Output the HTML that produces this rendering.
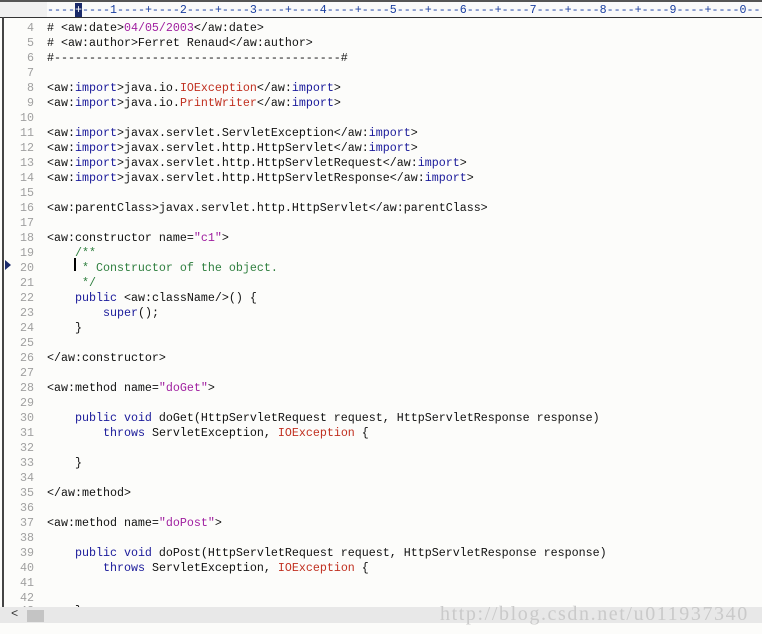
<!DOCTYPE html>
<html><head><style>
body{margin:0;width:762px;height:634px;background:#fcfcfa;position:relative;overflow:hidden;font-family:"Liberation Mono",monospace;font-size:11.67px}
#ruler{position:absolute;left:0;top:0;width:762px;height:18px;background:#f0f0f0;border-top:2px solid #555;border-bottom:1px solid #333;box-sizing:border-box}
#rt{position:absolute;left:47px;top:2px;color:#1a3fa0;white-space:pre;line-height:13px}
#rt b{background:#1a2a6a;color:#fff;font-weight:normal}
#rb{position:absolute;left:47px;top:0;width:715px;height:15px;background:#fafafa}
#lb{position:absolute;left:2px;top:17px;width:2px;height:590px;background:#444}
.l{position:absolute;left:0;height:15px;line-height:15px;white-space:pre;color:#111}
.n{position:absolute;width:34px;text-align:right;color:#a0a0a0}
.c{position:absolute;left:47px}
.k{color:#1a1a9a}.r{color:#c03020}.p{color:#a020a0}.g{color:#2f7f3f}
#sb{position:absolute;left:0;top:607px;width:762px;height:16px;background:#e8e8e8}
#th{position:absolute;left:27px;top:610px;width:17px;height:12px;background:#c4c4c4}
#wm{position:absolute;left:440px;top:603px;font-family:"Liberation Serif",serif;font-size:20px;color:#cacaca;letter-spacing:1.6px}
</style></head><body>
<div id="ruler"><div id="rb"></div><div id="rt">----<b>+</b>----1----+----2----+----3----+----4----+----5----+----6----+----7----+----8----+----9----+----0---</div></div>
<div id="lb"></div>
<div class="l" style="top:21px"><span class="n">4</span><span class="c"># &lt;aw:date&gt;<span class="p">04/05/2003</span>&lt;/aw:date&gt;</span></div>
<div class="l" style="top:36px"><span class="n">5</span><span class="c"># &lt;aw:author&gt;Ferret Renaud&lt;/aw:author&gt;</span></div>
<div class="l" style="top:51px"><span class="n">6</span><span class="c">#-----------------------------------------#</span></div>
<div class="l" style="top:66px"><span class="n">7</span></div>
<div class="l" style="top:81px"><span class="n">8</span><span class="c">&lt;aw:<span class="k">import</span>&gt;java.io.<span class="r">IOException</span>&lt;/aw:<span class="k">import</span>&gt;</span></div>
<div class="l" style="top:96px"><span class="n">9</span><span class="c">&lt;aw:<span class="k">import</span>&gt;java.io.<span class="r">PrintWriter</span>&lt;/aw:<span class="k">import</span>&gt;</span></div>
<div class="l" style="top:111px"><span class="n">10</span></div>
<div class="l" style="top:126px"><span class="n">11</span><span class="c">&lt;aw:<span class="k">import</span>&gt;javax.servlet.ServletException&lt;/aw:<span class="k">import</span>&gt;</span></div>
<div class="l" style="top:141px"><span class="n">12</span><span class="c">&lt;aw:<span class="k">import</span>&gt;javax.servlet.http.HttpServlet&lt;/aw:<span class="k">import</span>&gt;</span></div>
<div class="l" style="top:156px"><span class="n">13</span><span class="c">&lt;aw:<span class="k">import</span>&gt;javax.servlet.http.HttpServletRequest&lt;/aw:<span class="k">import</span>&gt;</span></div>
<div class="l" style="top:171px"><span class="n">14</span><span class="c">&lt;aw:<span class="k">import</span>&gt;javax.servlet.http.HttpServletResponse&lt;/aw:<span class="k">import</span>&gt;</span></div>
<div class="l" style="top:186px"><span class="n">15</span></div>
<div class="l" style="top:201px"><span class="n">16</span><span class="c">&lt;aw:parentClass&gt;javax.servlet.http.HttpServlet&lt;/aw:parentClass&gt;</span></div>
<div class="l" style="top:216px"><span class="n">17</span></div>
<div class="l" style="top:231px"><span class="n">18</span><span class="c">&lt;aw:constructor name=<span class="p">"c1"</span>&gt;</span></div>
<div class="l" style="top:246px"><span class="n">19</span><span class="c g">    /**</span></div>
<div class="l" style="top:261px"><span class="n">20</span><span class="c g">     * Constructor of the object.</span></div>
<div class="l" style="top:276px"><span class="n">21</span><span class="c g">     */</span></div>
<div class="l" style="top:291px"><span class="n">22</span><span class="c">    <span class="k">public</span> &lt;aw:className/&gt;() {</span></div>
<div class="l" style="top:306px"><span class="n">23</span><span class="c">        <span class="k">super</span>();</span></div>
<div class="l" style="top:321px"><span class="n">24</span><span class="c">    }</span></div>
<div class="l" style="top:336px"><span class="n">25</span></div>
<div class="l" style="top:351px"><span class="n">26</span><span class="c">&lt;/aw:constructor&gt;</span></div>
<div class="l" style="top:366px"><span class="n">27</span></div>
<div class="l" style="top:381px"><span class="n">28</span><span class="c">&lt;aw:method name=<span class="p">"doGet"</span>&gt;</span></div>
<div class="l" style="top:396px"><span class="n">29</span></div>
<div class="l" style="top:411px"><span class="n">30</span><span class="c">    <span class="k">public void</span> doGet(HttpServletRequest request, HttpServletResponse response)</span></div>
<div class="l" style="top:426px"><span class="n">31</span><span class="c">        <span class="k">throws</span> ServletException, <span class="r">IOException</span> {</span></div>
<div class="l" style="top:441px"><span class="n">32</span></div>
<div class="l" style="top:456px"><span class="n">33</span><span class="c">    }</span></div>
<div class="l" style="top:471px"><span class="n">34</span></div>
<div class="l" style="top:486px"><span class="n">35</span><span class="c">&lt;/aw:method&gt;</span></div>
<div class="l" style="top:501px"><span class="n">36</span></div>
<div class="l" style="top:516px"><span class="n">37</span><span class="c">&lt;aw:method name=<span class="p">"doPost"</span>&gt;</span></div>
<div class="l" style="top:531px"><span class="n">38</span></div>
<div class="l" style="top:546px"><span class="n">39</span><span class="c">    <span class="k">public void</span> doPost(HttpServletRequest request, HttpServletResponse response)</span></div>
<div class="l" style="top:561px"><span class="n">40</span><span class="c">        <span class="k">throws</span> ServletException, <span class="r">IOException</span> {</span></div>
<div class="l" style="top:576px"><span class="n">41</span></div>
<div class="l" style="top:591px"><span class="n">42</span></div>
<div class="l" style="top:604px"><span class="n">43</span><span class="c">    }</span></div>
<div style="position:absolute;left:74px;top:258px;width:2px;height:13px;background:#000"></div>
<div style="position:absolute;left:5px;top:260px;width:0;height:0;border-left:6px solid #1a2a6a;border-top:5px solid transparent;border-bottom:5px solid transparent"></div>
<div id="sb"></div>
<div style="position:absolute;left:11px;top:607px;font-size:12px;color:#333">&lt;</div>
<div id="th"></div>
<div id="wm">http://blog.csdn.net/u011937340</div>
</body></html>
